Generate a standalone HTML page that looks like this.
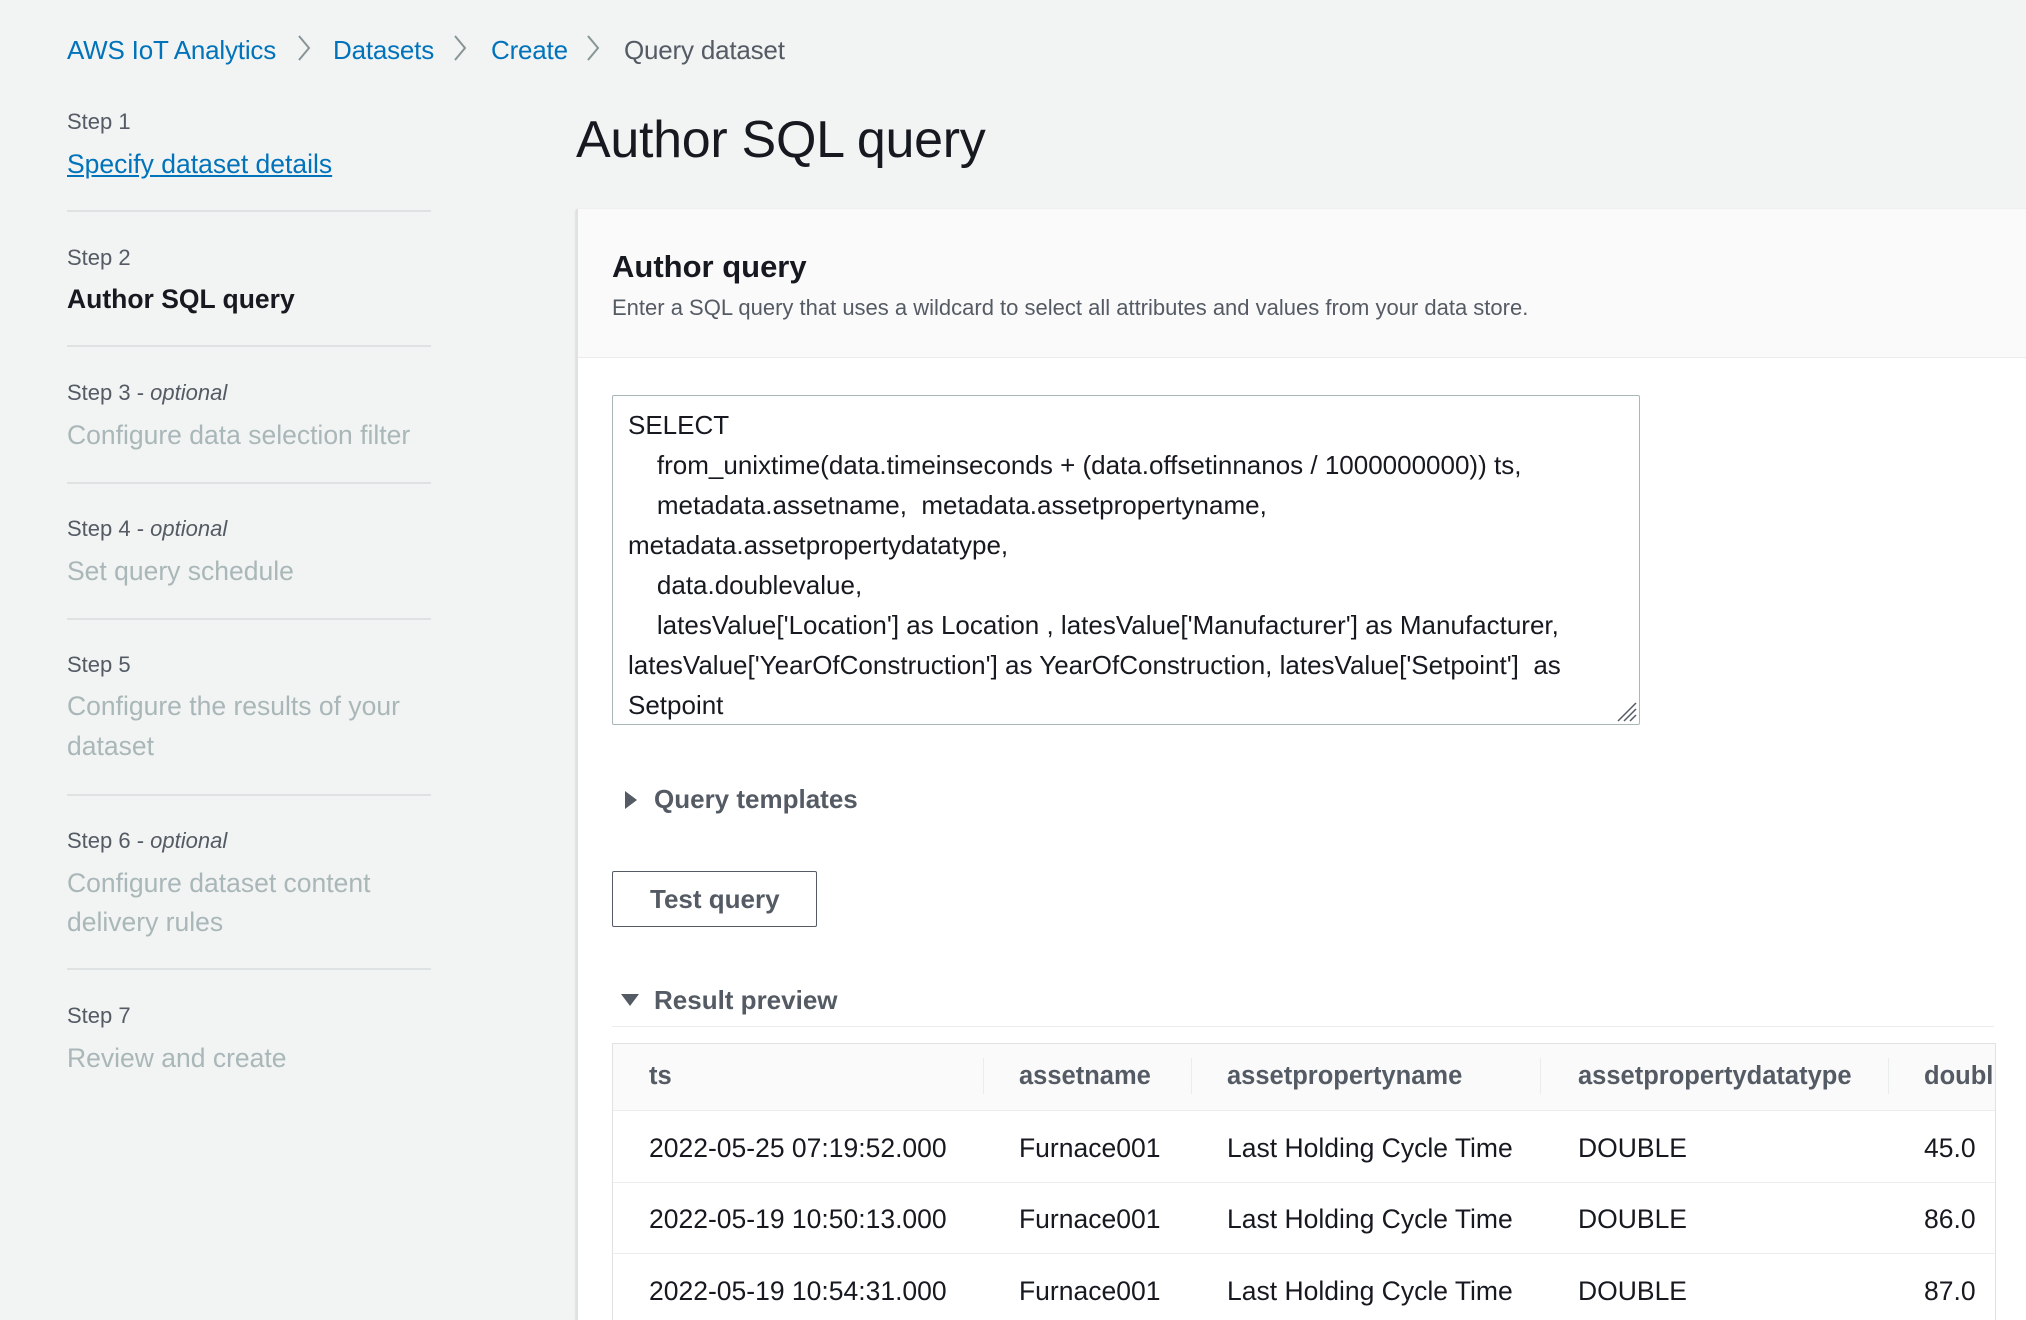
<!DOCTYPE html>
<html><head><meta charset="utf-8"><style>
*{margin:0;padding:0;box-sizing:border-box}
body{width:2026px;height:1320px;background:#f2f3f3;font-family:"Liberation Sans",sans-serif;color:#16191f;position:relative;overflow:hidden}
.a{position:absolute;white-space:nowrap}
.bc{top:35px;font-size:26px;color:#0073bb;letter-spacing:-0.2px}
.sep{top:33px;width:16px;height:30px}
.sl{left:67px;font-size:22px;color:#545b64}
.sl i{font-style:italic}
.st{left:67px;font-size:26.5px;color:#aab7b8}
.dv{left:67px;width:364px;height:2px;background:#dfe2e2}
.code{left:628px;font-size:26px;color:#16191f}
.th{top:1062px;font-size:25.5px;font-weight:bold;color:#545b64}
.td{font-size:26.5px;color:#16191f}
.cs{top:1058px;width:1px;height:36px;background:#eaeded}
</style></head><body>
<div class="a bc" style="left:67px">AWS IoT Analytics</div>
<svg class="a sep" style="left:296px" viewBox="0 0 16 30"><path d="M3 3 L13 15 L3 27" fill="none" stroke="#879596" stroke-width="2"/></svg>
<div class="a bc" style="left:333px">Datasets</div>
<svg class="a sep" style="left:452px" viewBox="0 0 16 30"><path d="M3 3 L13 15 L3 27" fill="none" stroke="#879596" stroke-width="2"/></svg>
<div class="a bc" style="left:491px">Create</div>
<svg class="a sep" style="left:585px" viewBox="0 0 16 30"><path d="M3 3 L13 15 L3 27" fill="none" stroke="#879596" stroke-width="2"/></svg>
<div class="a bc" style="left:624px;color:#545b64">Query dataset</div>

<div class="a sl" style="top:109px">Step 1</div>
<div class="a st" style="top:149px;color:#0073bb;text-decoration:underline">Specify dataset details</div>
<div class="a dv" style="top:210px"></div>
<div class="a sl" style="top:245px">Step 2</div>
<div class="a st" style="top:284px;color:#16191f;font-weight:bold">Author SQL query</div>
<div class="a dv" style="top:345px"></div>
<div class="a sl" style="top:380px">Step 3 - <i>optional</i></div>
<div class="a st" style="top:420px">Configure data selection filter</div>
<div class="a dv" style="top:482px"></div>
<div class="a sl" style="top:516px">Step 4 - <i>optional</i></div>
<div class="a st" style="top:556px">Set query schedule</div>
<div class="a dv" style="top:618px"></div>
<div class="a sl" style="top:652px">Step 5</div>
<div class="a st" style="top:691px">Configure the results of your</div>
<div class="a st" style="top:731px">dataset</div>
<div class="a dv" style="top:794px"></div>
<div class="a sl" style="top:828px">Step 6 - <i>optional</i></div>
<div class="a st" style="top:868px">Configure dataset content</div>
<div class="a st" style="top:907px">delivery rules</div>
<div class="a dv" style="top:968px"></div>
<div class="a sl" style="top:1003px">Step 7</div>
<div class="a st" style="top:1043px">Review and create</div>

<div class="a" style="left:576px;top:110px;font-size:52px;letter-spacing:-0.3px">Author SQL query</div>

<div class="a" style="left:576px;top:209px;width:1450px;height:1111px;background:#fff;border-left:2px solid #dfe2e2;box-shadow:0 1px 2px rgba(0,28,36,.2)"></div>
<div class="a" style="left:578px;top:209px;width:1448px;height:149px;background:#fafafa;border-bottom:1px solid #eaeded"></div>
<div class="a" style="left:612px;top:249px;font-size:31px;font-weight:bold">Author query</div>
<div class="a" style="left:612px;top:295px;font-size:22px;color:#545b64">Enter a SQL query that uses a wildcard to select all attributes and values from your data store.</div>

<div class="a" style="left:612px;top:395px;width:1028px;height:330px;border:1px solid #aab7b8;border-radius:2px;background:#fff"></div>
<div class="a code" style="top:410px">SELECT</div>
<div class="a code" style="top:450px">&nbsp;&nbsp;&nbsp;&nbsp;from_unixtime(data.timeinseconds + (data.offsetinnanos / 1000000000)) ts,</div>
<div class="a code" style="top:490px">&nbsp;&nbsp;&nbsp;&nbsp;metadata.assetname,&nbsp; metadata.assetpropertyname,</div>
<div class="a code" style="top:530px">metadata.assetpropertydatatype,</div>
<div class="a code" style="top:570px">&nbsp;&nbsp;&nbsp;&nbsp;data.doublevalue,</div>
<div class="a code" style="top:610px">&nbsp;&nbsp;&nbsp;&nbsp;latesValue['Location'] as Location , latesValue['Manufacturer'] as Manufacturer,</div>
<div class="a code" style="top:650px">latesValue['YearOfConstruction'] as YearOfConstruction, latesValue['Setpoint']&nbsp; as</div>
<div class="a code" style="top:690px">Setpoint</div>
<svg class="a" style="left:1612px;top:697px" width="26" height="26" viewBox="0 0 26 26"><path d="M24 6 L6 24 M24 12 L12 24 M24 18 L18 24" stroke="#545b64" stroke-width="1.5"/></svg>

<svg class="a" style="left:623px;top:789px" width="16" height="22" viewBox="0 0 16 22"><path d="M2 2 L14 11 L2 20Z" fill="#545b64"/></svg>
<div class="a" style="left:654px;top:784px;font-size:26px;font-weight:bold;color:#545b64">Query templates</div>

<div class="a" style="left:612px;top:871px;width:205px;height:56px;border:1px solid #545b64;border-radius:2px;background:#fff"></div>
<div class="a" style="left:650px;top:884px;font-size:26px;font-weight:bold;color:#545b64">Test query</div>

<svg class="a" style="left:619px;top:992px" width="22" height="16" viewBox="0 0 22 16"><path d="M2 2 L20 2 L11 14Z" fill="#545b64"/></svg>
<div class="a" style="left:654px;top:985px;font-size:26px;font-weight:bold;color:#545b64">Result preview</div>
<div class="a" style="left:612px;top:1026px;width:1382px;height:1px;background:#eaeded"></div>

<div class="a" style="left:612px;top:1043px;width:1384px;height:277px;border:1px solid #dfe2e2;border-bottom:none;background:#fff"></div>
<div class="a" style="left:613px;top:1044px;width:1382px;height:67px;background:#fafafa;border-bottom:1px solid #eaeded"></div>
<div class="a th" style="left:649px">ts</div>
<div class="a th" style="left:1019px">assetname</div>
<div class="a th" style="left:1227px">assetpropertyname</div>
<div class="a th" style="left:1578px">assetpropertydatatype</div>
<div class="a" style="left:1888px;top:1044px;width:106px;height:66px;overflow:hidden"><div class="a th" style="left:36px;top:18px">double</div></div>
<div class="a cs" style="left:983px"></div>
<div class="a cs" style="left:1191px"></div>
<div class="a cs" style="left:1540px"></div>
<div class="a cs" style="left:1888px"></div>

<div class="a td" style="left:649px;top:1133px">2022-05-25 07:19:52.000</div>
<div class="a td" style="left:1019px;top:1133px">Furnace001</div>
<div class="a td" style="left:1227px;top:1133px">Last Holding Cycle Time</div>
<div class="a td" style="left:1578px;top:1133px">DOUBLE</div>
<div class="a td" style="left:1924px;top:1133px">45.0</div>
<div class="a" style="left:613px;top:1182px;width:1382px;height:1px;background:#eaeded"></div>
<div class="a td" style="left:649px;top:1204px">2022-05-19 10:50:13.000</div>
<div class="a td" style="left:1019px;top:1204px">Furnace001</div>
<div class="a td" style="left:1227px;top:1204px">Last Holding Cycle Time</div>
<div class="a td" style="left:1578px;top:1204px">DOUBLE</div>
<div class="a td" style="left:1924px;top:1204px">86.0</div>
<div class="a" style="left:613px;top:1253px;width:1382px;height:1px;background:#eaeded"></div>
<div class="a td" style="left:649px;top:1276px">2022-05-19 10:54:31.000</div>
<div class="a td" style="left:1019px;top:1276px">Furnace001</div>
<div class="a td" style="left:1227px;top:1276px">Last Holding Cycle Time</div>
<div class="a td" style="left:1578px;top:1276px">DOUBLE</div>
<div class="a td" style="left:1924px;top:1276px">87.0</div>
</body></html>
